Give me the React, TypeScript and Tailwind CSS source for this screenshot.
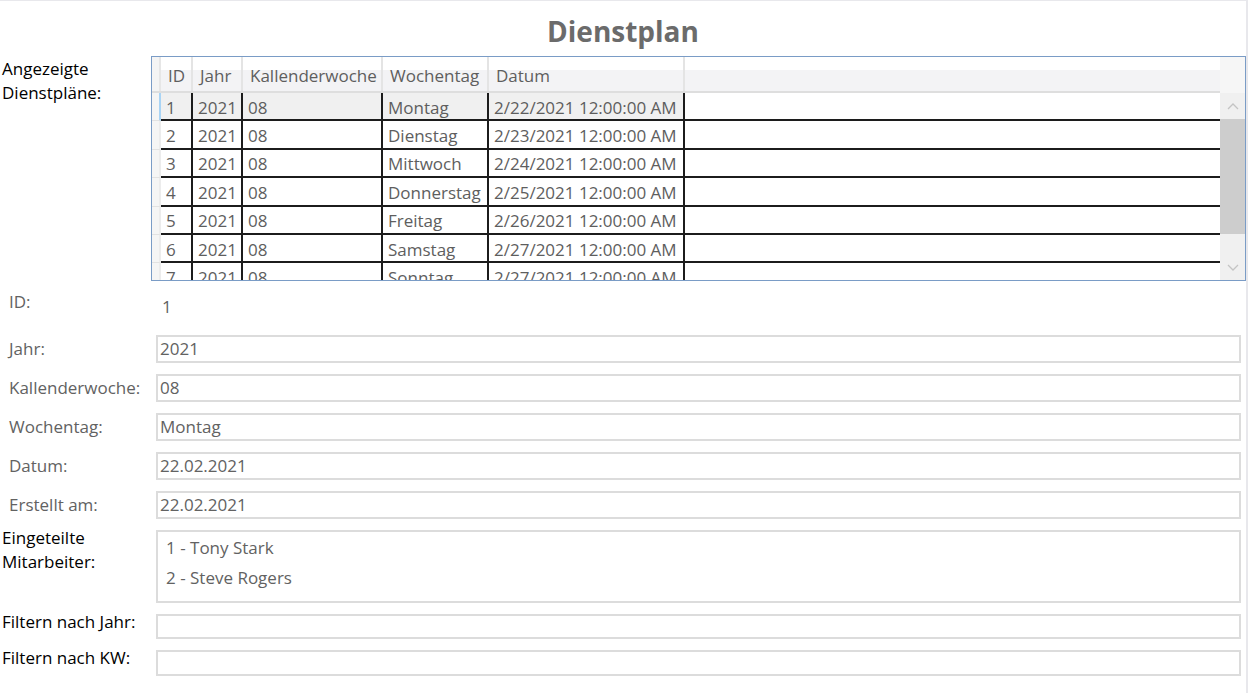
import React from "react";

const rows = [
  { id: "1", jahr: "2021", kw: "08", tag: "Montag", datum: "2/22/2021 12:00:00 AM" },
  { id: "2", jahr: "2021", kw: "08", tag: "Dienstag", datum: "2/23/2021 12:00:00 AM" },
  { id: "3", jahr: "2021", kw: "08", tag: "Mittwoch", datum: "2/24/2021 12:00:00 AM" },
  { id: "4", jahr: "2021", kw: "08", tag: "Donnerstag", datum: "2/25/2021 12:00:00 AM" },
  { id: "5", jahr: "2021", kw: "08", tag: "Freitag", datum: "2/26/2021 12:00:00 AM" },
  { id: "6", jahr: "2021", kw: "08", tag: "Samstag", datum: "2/27/2021 12:00:00 AM" },
  { id: "7", jahr: "2021", kw: "08", tag: "Sonntag", datum: "2/27/2021 12:00:00 AM" },
];

const cols = [
  { key: "id", label: "ID", w: "w-[32px]" },
  { key: "jahr", label: "Jahr", w: "w-[50px]" },
  { key: "kw", label: "Kallenderwoche", w: "w-[140px]" },
  { key: "tag", label: "Wochentag", w: "w-[106px]" },
  { key: "datum", label: "Datum", w: "w-[196px]" },
] as const;

function Chevron({ up }: { up?: boolean }) {
  return (
    <svg width="12" height="7" viewBox="0 0 12 7" className="block">
      <polyline
        points={up ? "1,6 6,1 11,6" : "1,1 6,6 11,1"}
        fill="none"
        stroke="#c4c4c4"
        strokeWidth="1.3"
      />
    </svg>
  );
}

function Field({ label, value }: { label: string; value: string }) {
  return (
    <div className="flex items-center h-[28px]">
      <div className="w-[156px] pl-[9px] text-[#626262]">{label}</div>
      <div className="flex-1 h-full border-2 border-[#dcdcdc] pl-[2px] flex items-center text-[#626262]">
        {value}
      </div>
    </div>
  );
}

export default function App() {
  return (
    <div className="w-[1248px] h-[693px] bg-white border-t border-r-2 border-[#e8e8ec] overflow-hidden font-['Open_Sans',sans-serif] text-[17px] leading-[24px]">
      <h1 className="text-center text-[28px] leading-[36px] font-bold text-[#6b6b6b] pt-[12px] h-[55px]">
        Dienstplan
      </h1>

      {/* Angezeigte Dienstpläne */}
      <div className="flex">
        <div className="w-[151px] pl-[2px] pt-[1px] text-black">
          Angezeigte
          <br />
          Dienstpläne:
        </div>
        <div className="w-[1095px] h-[225px] border border-[#7a9cc6] flex overflow-hidden">
          <div className="flex-1 flex flex-col overflow-hidden">
            <div className="flex h-[36px] shrink-0 border-b-2 border-[#dedede] bg-[linear-gradient(to_bottom,#ffffff_0%,#ffffff_38%,#f3f3f5_38%,#f3f3f5_100%)] text-[#5e5e5e]">
              <div className="w-[9px] bg-[#f4f4f4] border-r-2 border-[#e6e6e6]" />
              {cols.map((c) => (
                <div
                  key={c.key}
                  className={`${c.w} shrink-0 border-r-2 border-[#e4e4e4] pl-[7px] flex items-end pb-[3px] whitespace-nowrap`}
                >
                  {c.label}
                </div>
              ))}
              <div className="flex-1" />
            </div>
            {rows.map((r, i) => (
              <div key={r.id} className="flex h-[28.4px] shrink-0 text-[#5e5e5e]">
                <div
                  className={`w-[9px] shrink-0 bg-[#f5f5f5] border-b border-[#e2e2e2] ${
                    i === 0 ? "border-r-2 border-r-[#a9d4f5]" : "border-r-2 border-r-[#ececec]"
                  }`}
                />
                {cols.map((c) => (
                  <div
                    key={c.key}
                    className={`${c.w} shrink-0 border-r-2 border-b-2 border-[#1c1c1c] pl-[5px] pt-[3px] flex items-center whitespace-nowrap ${
                      i === 0 ? "bg-[#f0f0f0]" : "bg-white"
                    }`}
                  >
                    {r[c.key]}
                  </div>
                ))}
                <div className="flex-1 border-b-2 border-[#1c1c1c]" />
              </div>
            ))}
          </div>
          <div className="w-[25px] shrink-0 bg-[#f0f0f0] flex flex-col">
            <div className="h-[36px] shrink-0 bg-[#f6f6f6]" />
            <div className="h-[26px] shrink-0 flex items-center justify-center">
              <Chevron up />
            </div>
            <div className="h-[115px] shrink-0 bg-[#cdcdcd]" />
            <div className="flex-1 flex items-end justify-center pb-[9px]">
              <Chevron />
            </div>
          </div>
        </div>
      </div>

      {/* Detail form */}
      <div className="pr-[5px]">
        <div className="flex h-[54px]">
          <div className="w-[156px] pl-[9px] pt-[9px] text-[#626262]">ID:</div>
          <div className="pl-[6px] pt-[14px] text-[#626262]">1</div>
        </div>
        <div className="flex flex-col gap-[11px]">
          <Field label="Jahr:" value="2021" />
          <Field label="Kallenderwoche:" value="08" />
          <Field label="Wochentag:" value="Montag" />
          <Field label="Datum:" value="22.02.2021" />
          <Field label="Erstellt am:" value="22.02.2021" />
          <div className="flex h-[73px]">
            <div className="w-[156px] pl-[2px] -mt-[4px] text-black leading-[24px]">
              Eingeteilte
              <br />
              Mitarbeiter:
            </div>
            <div className="flex-1 border-2 border-[#dcdcdc] pl-[8px] pt-[4px] text-[#626262] flex flex-col gap-[6px]">
              <div>1 - Tony Stark</div>
              <div>2 - Steve Rogers</div>
            </div>
          </div>
          <div className="flex h-[25px]">
            <div className="w-[156px] pl-[2px] -mt-[4px] text-black">Filtern nach Jahr:</div>
            <div className="flex-1 border-2 border-[#dcdcdc]" />
          </div>
          <div className="flex h-[26px]">
            <div className="w-[156px] pl-[2px] -mt-[4px] text-black">Filtern nach KW:</div>
            <div className="flex-1 border-2 border-[#dcdcdc]" />
          </div>
        </div>
      </div>
    </div>
  );
}
